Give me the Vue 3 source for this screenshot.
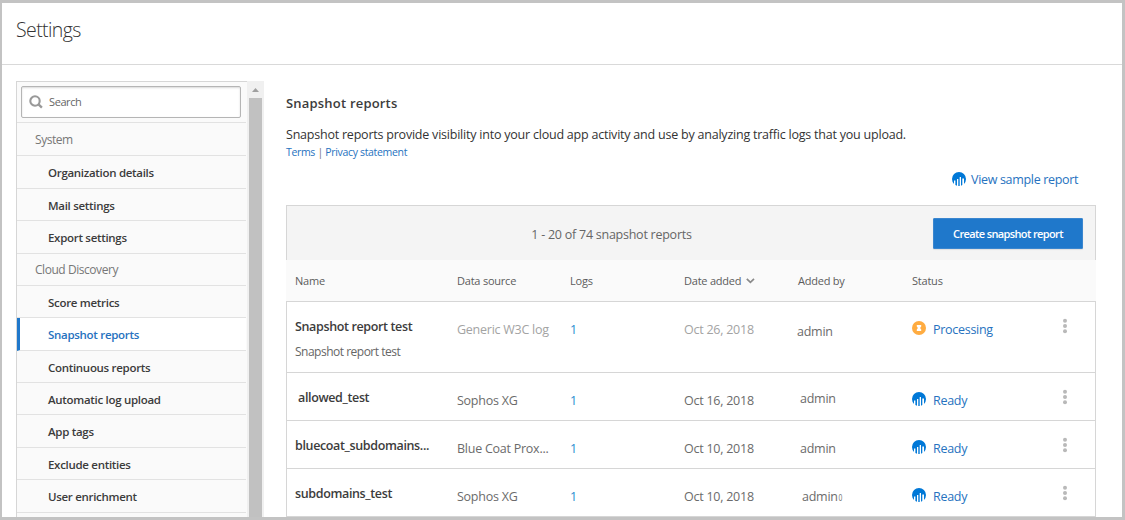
<script setup>
const groups = [
  {
    title: 'System', height: 33,
    items: [
      { label: 'Organization details', height: 33 },
      { label: 'Mail settings', height: 32 },
      { label: 'Export settings', height: 33 },
    ],
  },
  {
    title: 'Cloud Discovery', height: 32,
    items: [
      { label: 'Score metrics', height: 32 },
      { label: 'Snapshot reports', height: 33, active: true },
      { label: 'Continuous reports', height: 32 },
      { label: 'Automatic log upload', height: 32 },
      { label: 'App tags', height: 33 },
      { label: 'Exclude entities', height: 32 },
      { label: 'User enrichment', height: 33 },
    ],
  },
]

const reports = [
  { id: 1, name: 'Snapshot report test', note: 'Snapshot report test', source: 'Generic W3C log', date: 'Oct 26, 2018', status: 'Processing', by: 'admin' },
  { id: 2, name: 'allowed_test', source: 'Sophos XG', date: 'Oct 16, 2018', status: 'Ready', by: 'admin' },
  { id: 3, name: 'bluecoat_subdomains...', source: 'Blue Coat Prox...', date: 'Oct 10, 2018', status: 'Ready', by: 'admin' },
  { id: 4, name: 'subdomains_test', source: 'Sophos XG', date: 'Oct 10, 2018', status: 'Ready', by: 'admin', clipped: '0' },
]
</script>

<template>
  <div class="window">
    <header class="topbar"><h1>Settings</h1></header>
    <div class="body">
      <aside class="sidebar">
        <nav class="nav">
          <div class="searchwrap">
            <div class="search">
              <svg width="14" height="14" viewBox="0 0 14 14"><circle cx="6" cy="6" r="4.7" fill="none" stroke="#999" stroke-width="2.1" /><path d="M9.2 9.2l3.7 3.4" stroke="#999" stroke-width="2.4" /></svg>
              <span>Search</span>
            </div>
          </div>
          <template v-for="g in groups" :key="g.title">
            <div class="row group" :style="{ height: g.height + 'px' }">{{ g.title }}</div>
            <div v-for="i in g.items" :key="i.label" class="row item" :class="{ active: i.active }" :style="{ height: i.height + 'px' }">{{ i.label }}</div>
          </template>
        </nav>
        <div class="scroll">
          <svg width="17" height="17" viewBox="0 0 17 17"><path d="M5 11l3.5-4 3.5 4z" fill="#a0a0a0" /></svg>
          <div class="thumb"></div>
        </div>
      </aside>

      <main class="main">
        <h2>Snapshot reports</h2>
        <p class="intro">Snapshot reports provide visibility into your cloud app activity and use by analyzing traffic logs that you upload.</p>
        <p class="legal"><a>Terms</a> | <a>Privacy statement</a></p>
        <div class="sample">
          <svg class="disc" width="14" height="14" viewBox="0 0 14 14"><path d="M2 11.9A7 7 0 1 1 12 11.9V6.5h-1.7v6.6L9 13.7V5H7.7v9H6.3V7H5v6.7l-1.6-.8V8.5H2z" fill="#0078d7" /></svg>
          <a>View sample report</a>
        </div>

        <section class="table">
          <div class="toolbar">
            <span class="count">1 - 20 of 74 snapshot reports</span>
            <button>Create snapshot report</button>
          </div>
          <div class="grid head">
            <span>Name</span><span>Data source</span><span>Logs</span>
            <span>Date added <svg width="9" height="6" viewBox="0 0 9 6"><path d="M.8.8l3.6 3.6L8 .8" fill="none" stroke="#8a8a8a" stroke-width="1.7" /></svg></span>
            <span>Added by</span><span>Status</span>
          </div>
          <div v-for="r in reports" :key="r.id" class="grid report" :class="['r' + r.id, { tall: r.note }]">
            <div class="name">{{ r.name }}<div v-if="r.note" class="note">{{ r.note }}</div></div>
            <div class="cell muted source">{{ r.source }}</div>
            <div class="cell logs">1</div>
            <div class="cell muted">{{ r.date }}</div>
            <div class="cell by">{{ r.by }}<span v-if="r.clipped" class="clip">{{ r.clipped }}</span></div>
            <div class="cell status">
              <svg v-if="r.status === 'Ready'" class="disc" width="14" height="14" viewBox="0 0 14 14"><path d="M2 11.9A7 7 0 1 1 12 11.9V6.5h-1.7v6.6L9 13.7V5H7.7v9H6.3V7H5v6.7l-1.6-.8V8.5H2z" fill="#0078d7" /></svg>
              <svg v-else class="disc" width="14" height="14" viewBox="0 0 14 14"><circle cx="7" cy="7" r="7" fill="#ffac41" /><path d="M4.8 4h4.4v1.4L8.1 7l1.1 1.6V10H4.8V8.6L5.9 7 4.8 5.4z" fill="#fff" /></svg>
              <a>{{ r.status }}</a>
            </div>
            <svg class="dots" width="8" height="16" viewBox="0 0 8 16" fill="#b9b9b9"><circle cx="4" cy="2.7" r="2" /><circle cx="4" cy="8" r="2" /><circle cx="4" cy="13.3" r="2" /></svg>
          </div>
        </section>
      </main>
    </div>
  </div>
</template>

<style>
body { background: #fff; overflow: hidden; }
</style>

<style scoped>
* { box-sizing: border-box; }
.window {
  width: 1125px; height: 520px; overflow: hidden; background: #fff;
  border: solid #c3c3c3; border-width: 3px 3px 3px 2px;
  font-family: "Open Sans", "Noto Sans", sans-serif; font-size: 12px; color: #333;
  display: flex; flex-direction: column;
}
h1, h2, p { margin: 0; }
svg { display: block; flex: none; }
a { color: #2672c0; }
.topbar { height: 62px; flex: none; border-bottom: 1px solid #d9d9d9; padding: 13px 0 0 14px; }
h1 { font-size: 19.5px; line-height: 28px; font-weight: 300; letter-spacing: -0.6px; color: #333; }
.body { display: flex; flex: 1; min-height: 0; }
.sidebar { width: 248px; margin: 16px 0 0 14px; display: flex; overflow: hidden; }
.nav { width: 231px; flex: none; background: #fafafa; border: solid #d6d6d6; border-width: 1px 0 0 1px; }
.searchwrap { height: 41px; margin-right: 1px; padding: 4px 0 0 4px; border-bottom: 1px solid #e2e2e2; }
.search {
  width: 220px; height: 32px; background: #fff; border: 1px solid #b5b5b5; border-radius: 2px;
  box-shadow: inset 0 1px 2px rgba(0, 0, 0, .15);
  display: flex; align-items: center; gap: 6px; padding-left: 7px; font-size: 11px; letter-spacing: -0.4px; color: #666;
}
.search span { padding-bottom: 2px; }
.row { display: flex; align-items: center; margin-right: 1px; border-bottom: 1px solid #e2e2e2; }
.group { padding-left: 18px; color: #777; font-size: 12px; letter-spacing: -0.45px; }
.item { padding: 1px 0 0 31px; font-size: 11.5px; font-weight: 600; letter-spacing: -0.3px; color: #3c3c3c; }
.item.active { color: #2672c0; background: #fff; border-left: 3px solid #1f78cb; padding: 0 0 0 28px; }
.scroll { width: 17px; background: #f0f0f0; }
.thumb { width: 13px; height: 440px; margin-left: 2px; background: #c1c1c1; }
.main { width: 810px; margin-left: 22px; display: flex; flex-direction: column; }
h2 { margin-top: 28px; font-size: 13px; line-height: 20px; font-weight: 600; letter-spacing: 0.2px; color: #3c3c3c; }
.intro { margin-top: 12px; line-height: 20px; font-size: 12.5px; letter-spacing: -0.22px; white-space: nowrap; }
.legal { margin-top: -1px; font-size: 10.5px; line-height: 16px; letter-spacing: -0.33px; color: #777; }
.sample { margin: 10px 0 0 666px; height: 20px; line-height: 20px; display: flex; align-items: center; gap: 5px; font-size: 12.5px; letter-spacing: -0.32px; white-space: nowrap; }
.sample .disc { margin-top: -2px; }
.table { margin-top: 15px; }
.toolbar {
  height: 55px; background: #f4f4f4; border: 1px solid #d6d6d6; border-bottom: 0;
  display: grid; grid-template-columns: 646px 150px; align-items: center;
}
.count { text-align: center; padding: 2px 0 0 3px; font-size: 12.5px; color: #666; letter-spacing: -0.25px; }
button { height: 31px; border: 1px solid #3a86cf; border-radius: 1px; background: #1f78cb; color: #fff; font: 600 11px "Open Sans", sans-serif; letter-spacing: -0.62px; padding: 0; box-shadow: 0 1px 1px rgba(0,0,0,.08); }
.grid { display: grid; grid-template-columns: 162px 113px 114px 114px 114px 149px 1fr; padding-left: 8px; white-space: nowrap; }
.head { height: 42px; padding-left: 9px; background: #fafafa; border-bottom: 1px solid #d6d6d6; align-items: center; font-size: 11px; letter-spacing: -0.22px; color: #5c5c5c; }
.head span { display: flex; align-items: center; gap: 5px; }
.report { height: 48px; border: solid #d6d6d6; border-width: 0 1px 1px; align-items: start; }
.tall { height: 71px; }
.name { padding-top: 15px; line-height: 20px; font-size: 12.5px; font-weight: 600; letter-spacing: -0.36px; color: #3c3c3c; }
.note { margin-top: 5px; font-size: 12px; font-weight: 400; letter-spacing: -0.5px; color: #666; }
.cell { padding-top: 18px; line-height: 20px; font-size: 12.5px; letter-spacing: -0.25px; color: #6b6b6b; }
.tall .muted { color: #a3a3a3; }
.logs { color: #2a8dd0; }
.status { display: flex; gap: 7px; letter-spacing: -0.28px; }
.status .disc { margin-top: 1px; }
.dots { margin-top: 16px; }
.r1 .by { padding-top: 20px; margin-left: -1px; }
.r2 .by { padding: 16px 0 0 2px; }
.r2 .name { padding-left: 3px; }
.r3 .by { padding-left: 2px; }
.r4 .by { padding-left: 4px; }
.clip { display: inline-block; font-size: 9px; transform: scaleX(.75); }
</style>
